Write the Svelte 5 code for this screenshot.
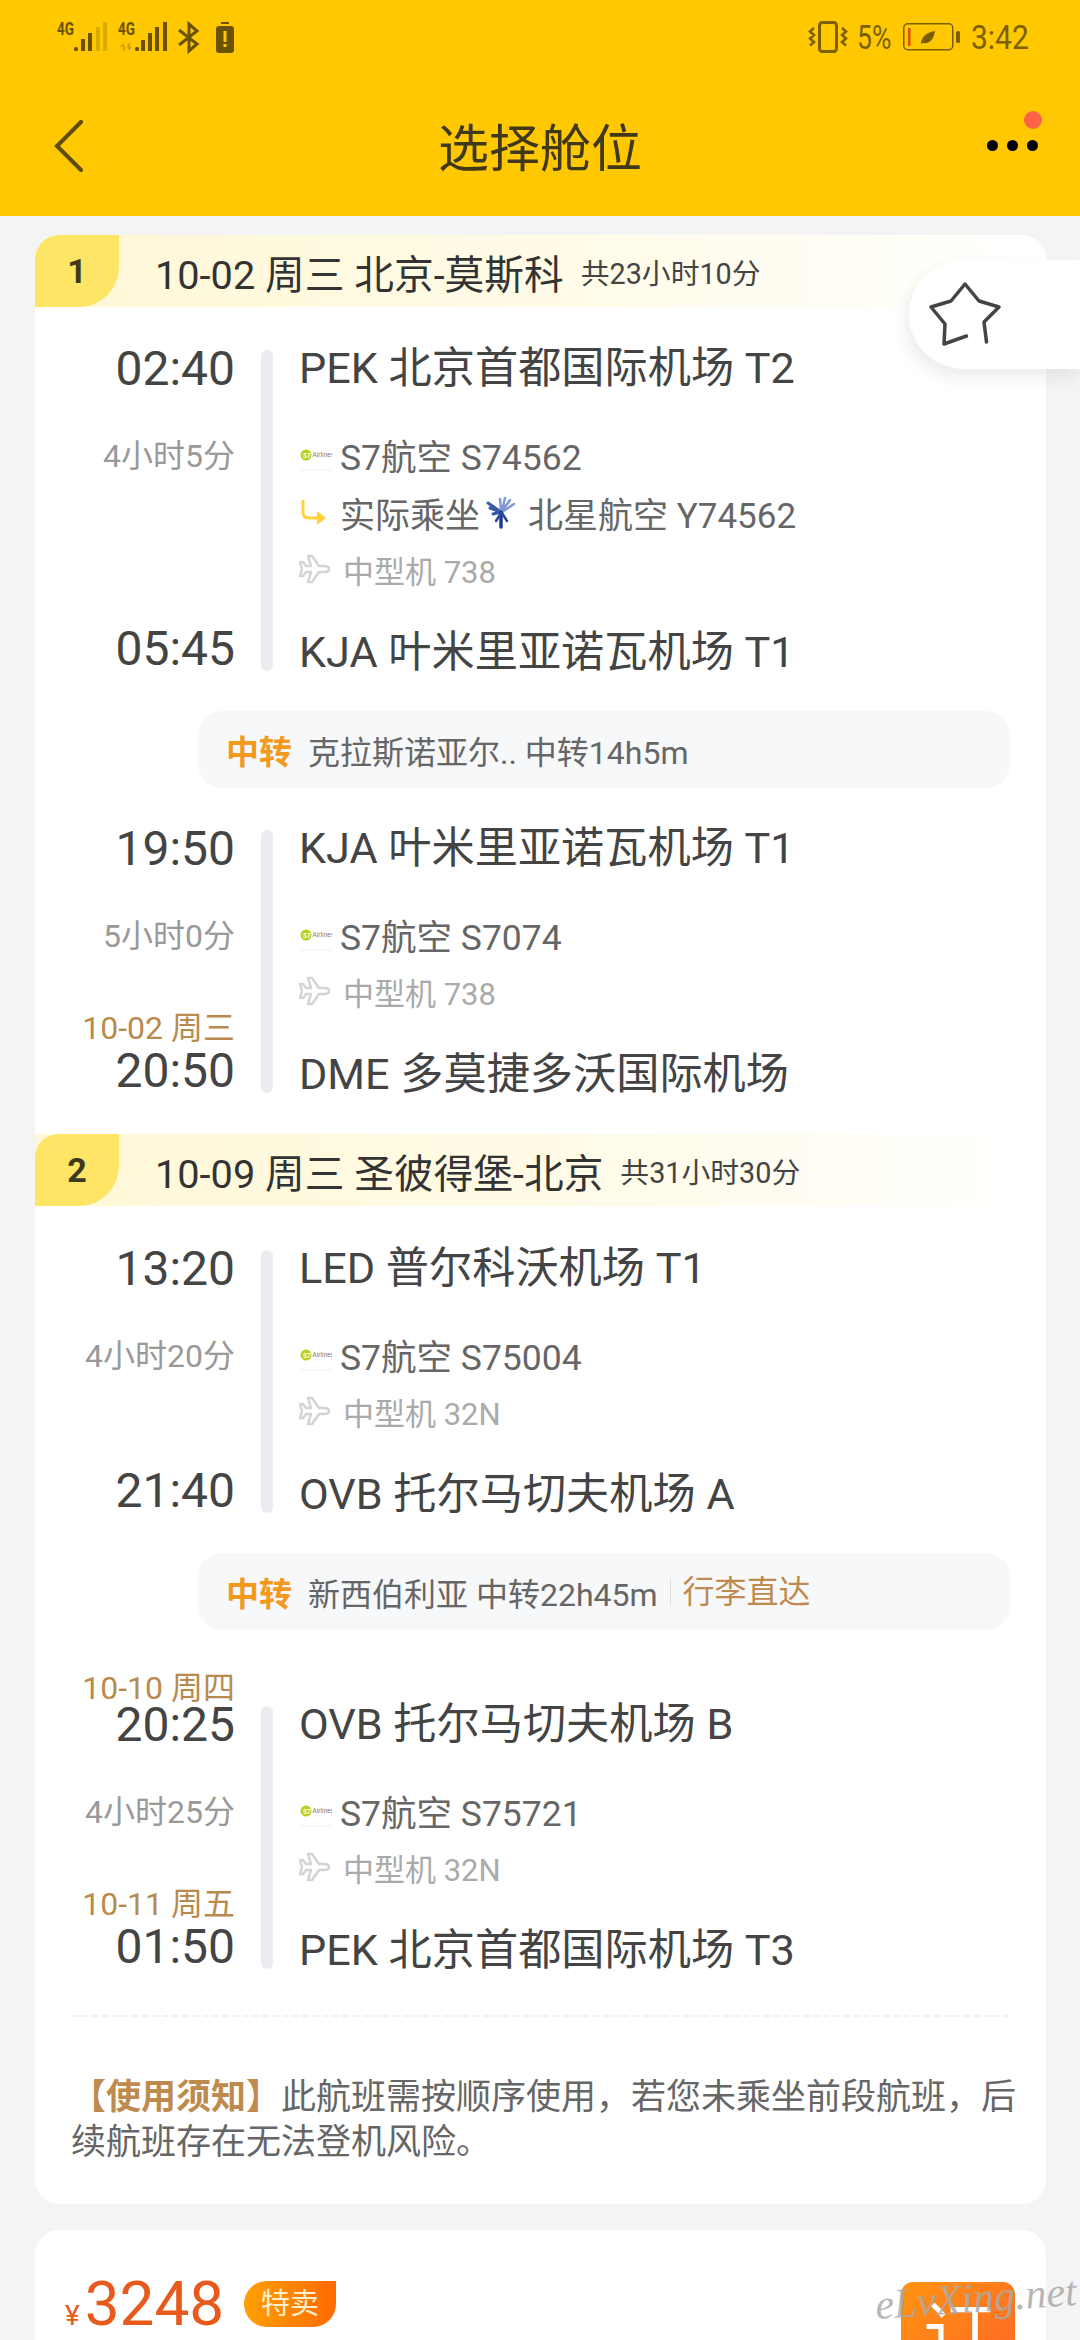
<script>
  const firstLeg = [
    {
      depTime: '02:40', depAirport: 'PEK 北京首都国际机场 T2', duration: '4小时5分',
      airline: 'S7航空 S74562', operated: '北星航空 Y74562', plane: '中型机 738',
      arrTime: '05:45', arrAirport: 'KJA 叶米里亚诺瓦机场 T1'
    },
    {
      depTime: '19:50', depAirport: 'KJA 叶米里亚诺瓦机场 T1', duration: '5小时0分',
      airline: 'S7航空 S7074', plane: '中型机 738',
      arrDate: '10-02 周三', arrTime: '20:50', arrAirport: 'DME 多莫捷多沃国际机场'
    }
  ];

  const secondLeg = [
    {
      depTime: '13:20', depAirport: 'LED 普尔科沃机场 T1', duration: '4小时20分',
      airline: 'S7航空 S75004', plane: '中型机 32N',
      arrTime: '21:40', arrAirport: 'OVB 托尔马切夫机场 A'
    },
    {
      depDate: '10-10 周四', depTime: '20:25', depAirport: 'OVB 托尔马切夫机场 B', duration: '4小时25分',
      airline: 'S7航空 S75721', plane: '中型机 32N',
      arrDate: '10-11 周五', arrTime: '01:50', arrAirport: 'PEK 北京首都国际机场 T3'
    }
  ];
</script>

{#snippet flightBlock(f, spaced)}
  <div class="flight" class:spaced>
    <div class="times">
      {#if f.depDate}<div class="date dep-date">{f.depDate}</div>{/if}
      <div class="time">{f.depTime}</div>
      <div class="duration">{f.duration}</div>
      <div class="arr">
        {#if f.arrDate}<div class="date arr-date">{f.arrDate}</div>{/if}
        <div class="time arr-time">{f.arrTime}</div>
      </div>
    </div>
    <div class="bar"></div>
    <div class="info">
      <div class="airport">{f.depAirport}</div>
      <div class="row airline">
        <svg class="logo" width="33" height="36" viewBox="0 0 33 36">
          <circle cx="7" cy="19" r="5.500" fill="#b7d024" />
          <text x="4" y="21.500" font-size="6.500" font-weight="700" fill="#fff" font-family="Roboto">S7</text>
          <text x="13.500" y="21" font-size="6.500" fill="#777" font-family="Roboto">Airlines</text>
          <path d="M1 34h31" stroke="#eee" stroke-width="1" />
        </svg>
        <span>{f.airline}</span>
      </div>
      {#if f.operated}
        <div class="row operated">
          <svg class="logo" width="33" height="36" viewBox="0 0 33 36">
            <path d="M4 6v12q0 6 6 6h9" fill="none" stroke="#ffd338" stroke-width="3" />
            <path d="M18 17l9 7-9 7z" fill="#ffd338" />
          </svg>
          <span>实际乘坐</span>
          <svg class="bird" width="30" height="34" viewBox="0 0 30 34" fill="none" stroke-linecap="round">
            <path d="M15 17L2 8M15 17L4 13M15 17L7 19" stroke="#3a58a8" stroke-width="3" />
            <path d="M15 16L14 4M16 16L19 3M16 16L24 5M16 17L28 9" stroke="#8298d2" stroke-width="2.500" />
            <path d="M15 17L15 32" stroke="#1f3a8c" stroke-width="3.500" />
            <path d="M15 18L10 26M16 18L21 26" stroke="#2c4796" stroke-width="2.500" />
          </svg>
          <span>{f.operated}</span>
        </div>
      {/if}
      <div class="row plane">
        <svg class="logo" width="32" height="32" viewBox="0 0 32 32">
          <path d="M30 16c0-2-2-3-5-3h-5L13 3H9l3 10H7L4 9H1l2 7-2 7h3l3-4h5L9 29h4l7-10h5c3 0 5-1 5-3z" fill="none" stroke="#d4d4d4" stroke-width="2.500" stroke-linejoin="round" />
        </svg>
        <span>{f.plane}</span>
      </div>
      <div class="airport arr-airport">{f.arrAirport}</div>
    </div>
  </div>
{/snippet}

<div class="page">
  <header class="top">
    <div class="status">
      <svg width="190" height="40" viewBox="50 15 190 40" fill="#6b5200">
        <text x="57" y="35" class="net" textLength="17" lengthAdjust="spacingAndGlyphs">4G</text>
        <rect x="74" y="47" width="4" height="4" rx="1.500" />
        <rect x="81" y="39" width="4" height="12" />
        <rect x="88" y="33" width="4" height="18" />
        <rect x="96" y="27" width="4" height="24" opacity=".25" />
        <rect x="103" y="22" width="4" height="29" opacity=".25" />
        <text x="118" y="35" class="net" textLength="17" lengthAdjust="spacingAndGlyphs">4G</text>
        <path d="M120 47l3-4 2 4v4h-2v-4z M128 43h2v4l2 0-3 4-2-4z" opacity=".3" />
        <rect x="135" y="47" width="4" height="4" rx="1.500" />
        <rect x="141" y="40" width="4" height="11" />
        <rect x="148" y="33" width="4" height="18" />
        <rect x="155" y="27" width="4" height="24" />
        <rect x="163" y="22" width="4" height="29" />
        <path d="M180 30l18 14-8 7V24l8 7-18 14" transform="translate(-1 0)" fill="none" stroke="#6b5200" stroke-width="3" />
        <rect x="221" y="22" width="8" height="2" />
        <rect x="216" y="26" width="18" height="27" rx="3" />
        <rect x="223.500" y="31" width="3" height="11" fill="#ffc800" />
        <rect x="223.500" y="44" width="3" height="3" fill="#ffc800" />
      </svg>
      <div class="status-right">
        <svg width="40" height="32" viewBox="0 0 40 32" fill="none" stroke="#7b5f00">
          <rect x="11.500" y="1.500" width="17" height="29" rx="3" stroke-width="3" />
          <path d="M6 7L2 10.500l4 3.500-4 3.500 4 3.500-4 3.500M34 7l4 3.500-4 3.500 4 3.500-4 3.500 4 3.500" stroke-width="2.500" />
        </svg>
        <span class="pct">5%</span>
        <svg width="57" height="28" viewBox="0 0 57 28">
          <rect x=".750" y=".750" width="49" height="26" rx="4" fill="none" stroke="#7b5f00" stroke-width="1.500" />
          <rect x="5" y="5" width="2.500" height="18" fill="#e0500c" />
          <path d="M18 21c0-7 6-12 14-13-1 8-5 13-12 12z" fill="#7b5f00" />
          <rect x="53" y="8" width="4" height="12" rx="1.500" fill="#7b5f00" />
        </svg>
        <span class="clock">3:42</span>
      </div>
    </div>
    <div class="nav">
      <svg class="back" width="32" height="52" viewBox="0 0 32 52">
        <path d="M28 2L4 26l24 24" fill="none" stroke="#5e4c0c" stroke-width="4" stroke-linecap="round" />
      </svg>
      <h1>选择舱位</h1>
      <div class="more">
        <i></i><i></i><i></i>
        <b></b>
      </div>
    </div>
  </header>

  <main class="content">
    <section class="card">
      <div class="leg-head">
        <div class="badge">1</div>
        <span class="leg-title">10-02 周三 北京-莫斯科</span>
        <span class="leg-total">共23小时10分</span>
      </div>
      {@render flightBlock(firstLeg[0], false)}
      <div class="transfer">
        <strong>中转</strong>
        <span>克拉斯诺亚尔.. 中转14h5m</span>
      </div>
      {@render flightBlock(firstLeg[1], false)}

      <div class="leg-head second">
        <div class="badge">2</div>
        <span class="leg-title">10-09 周三 圣彼得堡-北京</span>
        <span class="leg-total">共31小时30分</span>
      </div>
      {@render flightBlock(secondLeg[0], false)}
      <div class="transfer">
        <strong>中转</strong>
        <span>新西伯利亚 中转22h45m</span>
        <em>行李直达</em>
      </div>
      {@render flightBlock(secondLeg[1], true)}

      <div class="dashed"></div>
      <p class="notice"><b>【使用须知】</b>此航班需按顺序使用，若您未乘坐前段航班，后续航班存在无法登机风险。</p>
    </section>

    <section class="card price-card">
      <div class="price"><small>¥</small>3248</div>
      <div class="tag">特卖</div>
      <div class="book">订</div>
    </section>
  </main>

  <button class="fav" aria-label="收藏">
    <svg width="76" height="68" viewBox="0 0 76 68">
      <path d="M38.500 55L16 63l1-20L3 26l20-6L37 3l14 17 20 6-15 15 2.500 20" fill="none" stroke="#444" stroke-width="3.500" stroke-linecap="round" stroke-linejoin="round" />
    </svg>
  </button>

  <div class="mark">eLvXing.net</div>
</div>

<style>
  :global(body) {
    margin: 0;
    background: #f4f4f4;
  }

  .page {
    position: relative;
    width: 1080px;
    height: 2340px;
    overflow: hidden;
    background: #f4f4f4;
    font-family: Roboto, "Noto Sans CJK SC", sans-serif;
    color: #444;
  }

  .top {
    height: 216px;
    background: #ffc800;
  }

  .status {
    height: 76px;
    box-sizing: border-box;
    padding: 15px 51px 0 50px;
    display: flex;
    justify-content: space-between;
    align-items: flex-start;
  }

  .net {
    font-family: Roboto, sans-serif;
    font-size: 18px;
    font-weight: 700;
  }

  .status-right {
    display: flex;
    align-items: center;
    height: 40px;
    margin-top: 2px;
    color: #7b5f00;
    font-size: 34px;
  }

  .pct,
  .clock {
    display: inline-block;
    white-space: nowrap;
    transform-origin: left center;
  }

  .pct {
    width: 35px;
    margin: 0 11px 0 9px;
    transform: scaleX(0.78);
  }

  .clock {
    width: 58px;
    margin-left: 11px;
    transform: scaleX(0.88);
  }

  .nav {
    position: relative;
    height: 140px;
    display: flex;
    align-items: center;
    justify-content: center;
  }

  .back {
    position: absolute;
    left: 53px;
    top: 44px;
  }

  h1 {
    margin: 0 0 2px;
    font-size: 51px;
    font-weight: 400;
    color: #40381a;
  }

  .more {
    position: absolute;
    right: 42px;
    top: 64px;
    display: flex;
    gap: 9px;
  }

  .more i {
    width: 11px;
    height: 11px;
    border-radius: 50%;
    background: #000;
  }

  .more b {
    position: absolute;
    right: -4px;
    top: -29px;
    width: 18px;
    height: 18px;
    border-radius: 50%;
    background: #ff6347;
  }

  .content {
    padding: 19px 34px 0 35px;
  }

  .card {
    background: #fff;
    border-radius: 24px;
    overflow: hidden;
  }

  .leg-head {
    height: 72px;
    display: flex;
    align-items: center;
    background: linear-gradient(90deg, #fff7d6 0%, #fffbe6 50%, #ffffff 100%);
  }

  .leg-head.second {
    margin-top: 41px;
  }

  .badge {
    width: 84px;
    height: 72px;
    border-radius: 24px 0 40px 0;
    background: #ffe566;
    display: flex;
    align-items: center;
    justify-content: center;
    font-size: 34px;
    font-weight: 700;
    color: #3d3a1e;
  }

  .leg-title {
    margin-left: 36px;
    font-size: 39.700px;
    color: #333;
  }

  .leg-total {
    margin-left: 17px;
    font-size: 28.800px;
    color: #444;
  }

  .flight {
    display: flex;
    margin-top: 43px;
  }

  .second + .flight {
    margin-top: 44px;
  }

  .transfer + .flight {
    margin-top: 42px;
  }

  .transfer + .flight.spaced {
    margin-top: 76px;
  }

  .times {
    width: 200px;
    display: flex;
    flex-direction: column;
    text-align: right;
  }

  .time {
    height: 36px;
    line-height: 38px;
    font-size: 48px;
    color: #444;
  }

  .arr-time {
    height: 39px;
    line-height: 40px;
    padding-bottom: 3px;
  }

  .duration {
    margin-top: 50px;
    line-height: 40px;
    font-size: 32px;
    color: #999;
  }

  .arr {
    margin-top: auto;
  }

  .date {
    line-height: 30px;
    font-size: 32px;
    color: #b98a4e;
    white-space: nowrap;
  }

  .dep-date {
    margin: -33px 0 3px;
  }

  .arr-date {
    margin-bottom: 8px;
  }

  .bar {
    width: 12px;
    margin: 0 26px;
    border-radius: 6px;
    background: #ebecf0;
  }

  .info {
    display: flex;
    flex-direction: column;
    white-space: nowrap;
  }

  .airport {
    height: 36px;
    line-height: 38px;
    font-size: 43.200px;
    color: #444;
  }

  .arr-airport {
    height: 42px;
    margin-top: 40px;
    line-height: 47px;
  }

  .row {
    display: flex;
    align-items: center;
    height: 40px;
    margin-top: 18px;
    font-size: 35.500px;
    color: #666;
  }

  .airline {
    margin-top: 48px;
  }

  .operated {
    font-size: 35px;
  }

  .logo {
    margin-right: 8px;
    flex: none;
  }

  .bird {
    margin: 0 12px 0 6px;
  }

  .plane {
    margin-top: 17px;
    font-size: 31px;
    color: #aaa;
  }

  .plane .logo {
    margin-right: 12px;
  }

  .transfer {
    display: flex;
    align-items: center;
    width: 812px;
    height: 77px;
    margin: 40px 0 0 163px;
    padding-left: 28px;
    box-sizing: border-box;
    border-radius: 24px;
    background: #f7f8fa;
    font-size: 32px;
    color: #666;
    white-space: nowrap;
  }

  .transfer strong {
    margin-right: 16px;
    font-size: 33px;
    color: #f39a1e;
  }

  .transfer em {
    margin-left: 12px;
    padding-left: 12px;
    border-left: 1px solid #ddd;
    line-height: 26px;
    font-style: normal;
    color: #bf8a4e;
  }

  .dashed {
    margin: 46px 36px 0 37px;
    border-top: 2px dashed #f2f2f2;
  }

  .notice {
    margin: 58px 26px 39px 36px;
    line-height: 45px;
    font-size: 35px;
    color: #666;
  }

  .notice b {
    color: #bf8a4e;
  }

  .price-card {
    position: relative;
    margin-top: 26px;
    height: 300px;
    display: flex;
    align-items: flex-start;
    padding-top: 51px;
  }

  .price {
    margin-left: 30px;
    line-height: 46px;
    font-size: 62px;
    color: #e8591c;
  }

  .price small {
    margin-right: 5px;
    font-size: 28px;
  }

  .tag {
    width: 92px;
    height: 46px;
    margin-left: 20px;
    border-radius: 23px 0 23px 23px;
    background: linear-gradient(90deg, #ffa000, #ff6a00);
    color: #ffeecb;
    font-size: 29px;
    line-height: 46px;
    text-align: center;
  }

  .book {
    position: absolute;
    left: 866px;
    top: 52px;
    width: 114px;
    height: 200px;
    border-radius: 12px;
    background: linear-gradient(135deg, #ff9410, #ff4e34);
    color: #fff;
    font-size: 70px;
    line-height: 110px;
    text-align: center;
  }

  .fav {
    position: absolute;
    left: 909px;
    top: 260px;
    width: 171px;
    height: 109px;
    padding: 0 0 0 19px;
    border: 0;
    border-radius: 55px 0 0 55px;
    background: #fff;
    box-shadow: -4px 8px 16px rgba(0, 0, 0, 0.08);
    display: flex;
    align-items: center;
  }

  .mark {
    position: absolute;
    left: 875px;
    top: 2274px;
    font-family: "Liberation Serif", serif;
    font-style: italic;
    font-size: 42px;
    color: rgba(170, 170, 170, 0.85);
    white-space: nowrap;
    transform: rotate(-4deg);
  }
</style>
